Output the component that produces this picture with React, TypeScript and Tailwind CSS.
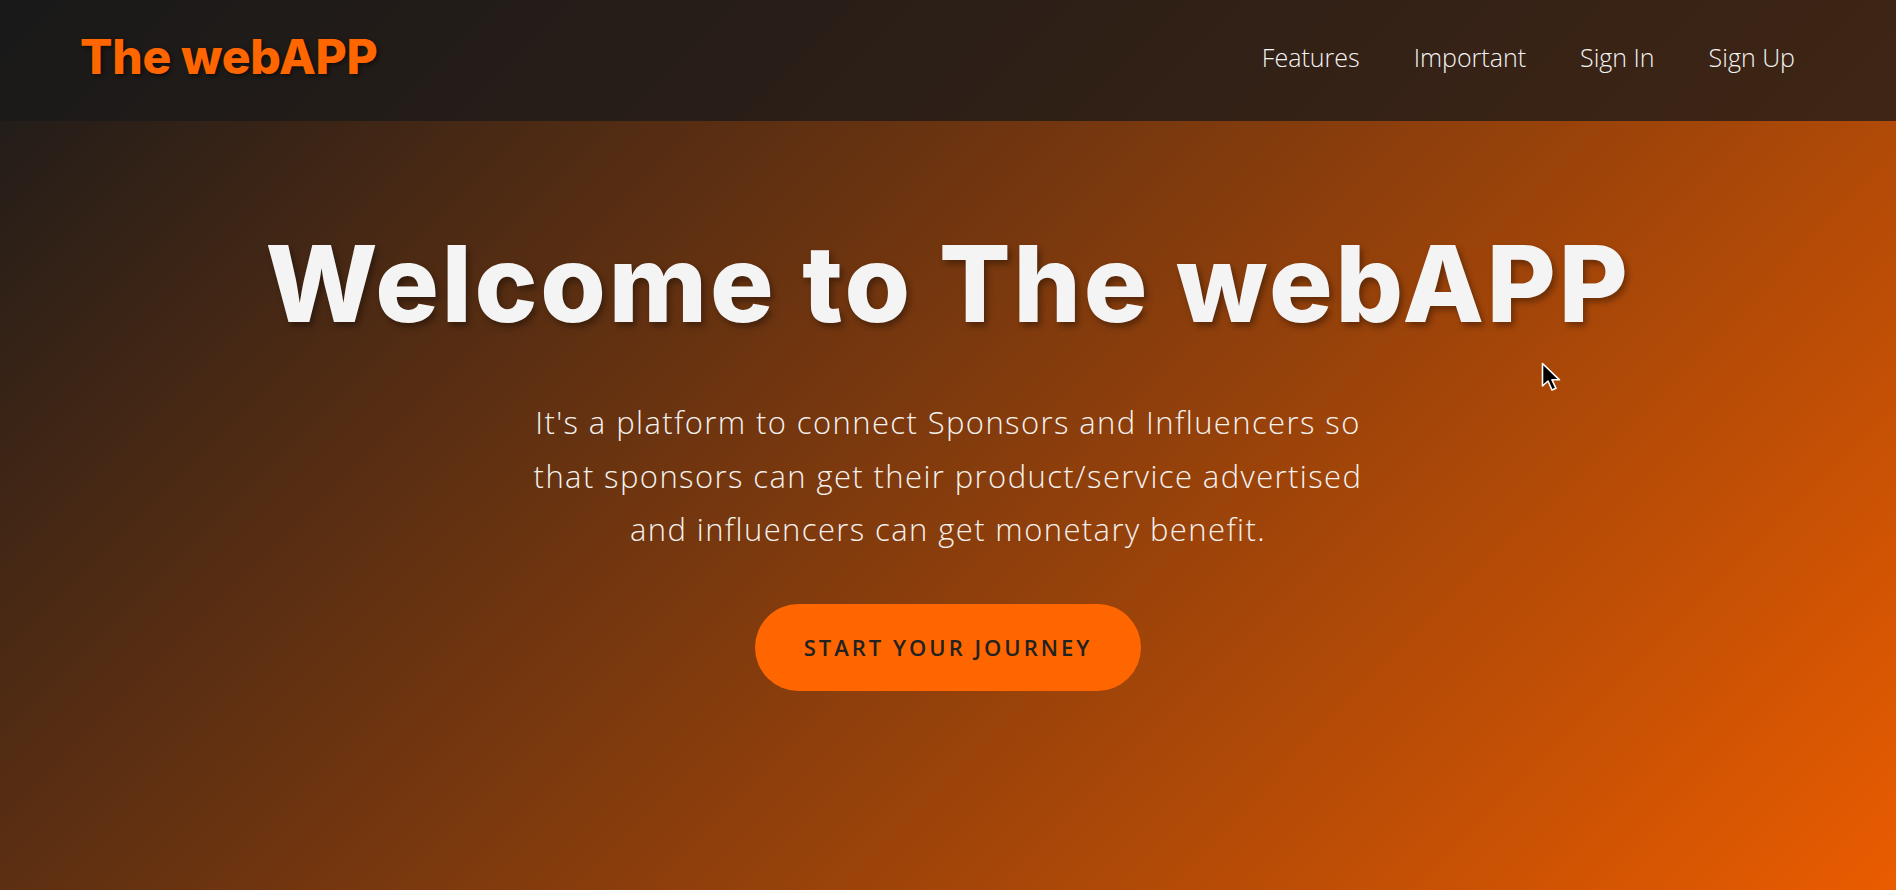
import React from "react";

export default function App() {
  const links = ["Features", "Important", "Sign In", "Sign Up"];
  return (
    <div className="relative min-h-[890px] w-full overflow-hidden bg-[linear-gradient(135deg,#1a1a1a_0%,#ea5c00_100%)] font-['Open_Sans',sans-serif]">
      <header className="flex h-[121px] items-center justify-between bg-[rgba(26,26,26,0.75)] pb-[7px] pl-[80px] pr-[101px]">
        <div className="font-['Inter',sans-serif] text-[48px] font-extrabold leading-none tracking-[-0.3px] text-[#ff6600] [text-shadow:2px_2px_4px_rgba(0,0,0,0.5)]">
          The webAPP
        </div>
        <nav className="flex items-center gap-[54px]">
          {links.map((l) => (
            <a key={l} className="text-[25px] font-light leading-none text-[#f4f4f4]">
              {l}
            </a>
          ))}
        </nav>
      </header>

      <main className="flex flex-col items-center pt-[110px] text-center">
        <h1 className="font-['Inter',sans-serif] text-[106px] font-extrabold leading-none tracking-[2.8px] text-[#f4f4f4] [text-shadow:3px_4px_6px_rgba(0,0,0,0.35)]">
          Welcome to The webAPP
        </h1>
        <p className="mt-[59px] text-[31px] font-light leading-[53.5px] tracking-[1.4px] text-[#f4f1ee]">
          It's a platform to connect Sponsors and Influencers so
          <br />
          that sponsors can get their product/service advertised
          <br />
          and influencers can get monetary benefit.
        </p>
        <button className="mt-[47px] flex h-[87px] w-[386px] items-center justify-center rounded-full bg-[#ff6600] text-[22px] font-semibold uppercase tracking-[3px] text-[#222222]">
          Start your journey
        </button>
      </main>

      <svg
        className="absolute left-[1541px] top-[362px]"
        width="22"
        height="32"
        viewBox="0 0 22 32"
      >
        <path
          d="M1.5 1.5 L1.5 24 L7 19 L11 28 L15 26.3 L11 17.8 L18.5 17.8 Z"
          fill="#000"
          stroke="#fff"
          strokeWidth="1.6"
          strokeLinejoin="round"
        />
      </svg>
    </div>
  );
}
